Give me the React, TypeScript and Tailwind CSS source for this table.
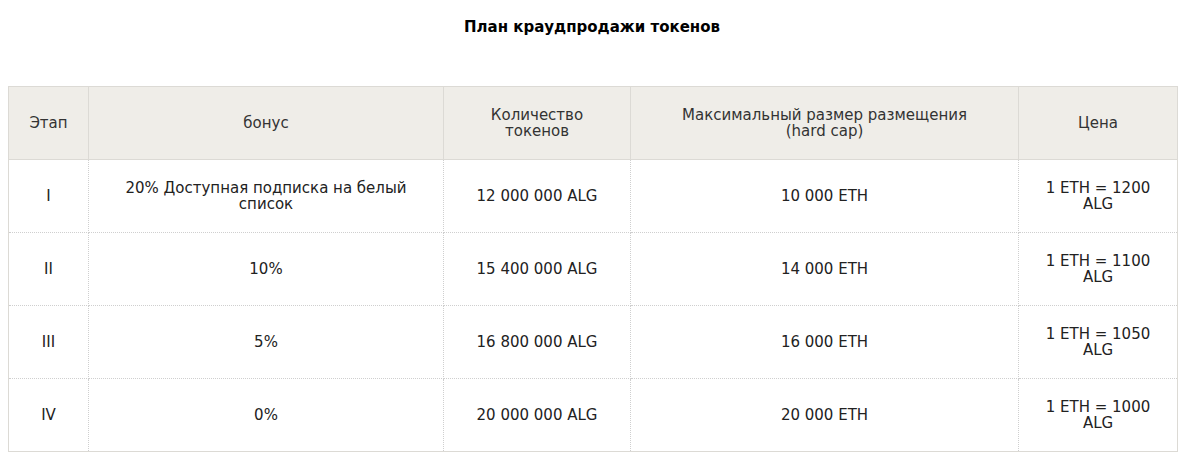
const rows = [
  { stage: "I", bonus: "20% Доступная подписка на белый список", tokens: "12 000 000 ALG", cap: "10 000 ETH", price: "1 ETH = 1200 ALG" },
  { stage: "II", bonus: "10%", tokens: "15 400 000 ALG", cap: "14 000 ETH", price: "1 ETH = 1100 ALG" },
  { stage: "III", bonus: "5%", tokens: "16 800 000 ALG", cap: "16 000 ETH", price: "1 ETH = 1050 ALG" },
  { stage: "IV", bonus: "0%", tokens: "20 000 000 ALG", cap: "20 000 ETH", price: "1 ETH = 1000 ALG" },
];

export default function App() {
  return (
    <div className="min-h-[460px] bg-white px-2 font-['DejaVu_Sans',sans-serif] text-[#222]">
      <h2 className="pt-[17px] pb-[49px] text-center text-[15px] font-bold leading-[20px] text-black">
        План краудпродажи токенов
      </h2>
      <table className="w-[1169px] table-fixed border-collapse border border-[#dcdad5] text-center text-[15px] leading-[16px]">
        <colgroup>
          <col className="w-[80px]" />
          <col className="w-[355px]" />
          <col className="w-[187px]" />
          <col className="w-[388px]" />
          <col className="w-[159px]" />
        </colgroup>
        <thead>
          <tr className="h-[73px] bg-[#efede8] text-[#333]">
            <th className="border border-[#dcdad5] px-2 font-normal">Этап</th>
            <th className="border border-[#dcdad5] px-8 font-normal">бонус</th>
            <th className="border border-[#dcdad5] px-9 font-normal">Количество токенов</th>
            <th className="border border-[#dcdad5] px-8 font-normal">Максимальный размер размещения (hard cap)</th>
            <th className="border border-[#dcdad5] px-4 font-normal">Цена</th>
          </tr>
        </thead>
        <tbody>
          {rows.map((r) => (
            <tr key={r.stage} className="h-[73px]">
              <td className="border border-dotted border-[#cfcfcf] px-2">{r.stage}</td>
              <td className="border border-dotted border-[#cfcfcf] px-[28px]">{r.bonus}</td>
              <td className="border border-dotted border-[#cfcfcf] px-2">{r.tokens}</td>
              <td className="border border-dotted border-[#cfcfcf] px-2">{r.cap}</td>
              <td className="border border-dotted border-[#cfcfcf] px-5">{r.price}</td>
            </tr>
          ))}
        </tbody>
      </table>
    </div>
  );
}
